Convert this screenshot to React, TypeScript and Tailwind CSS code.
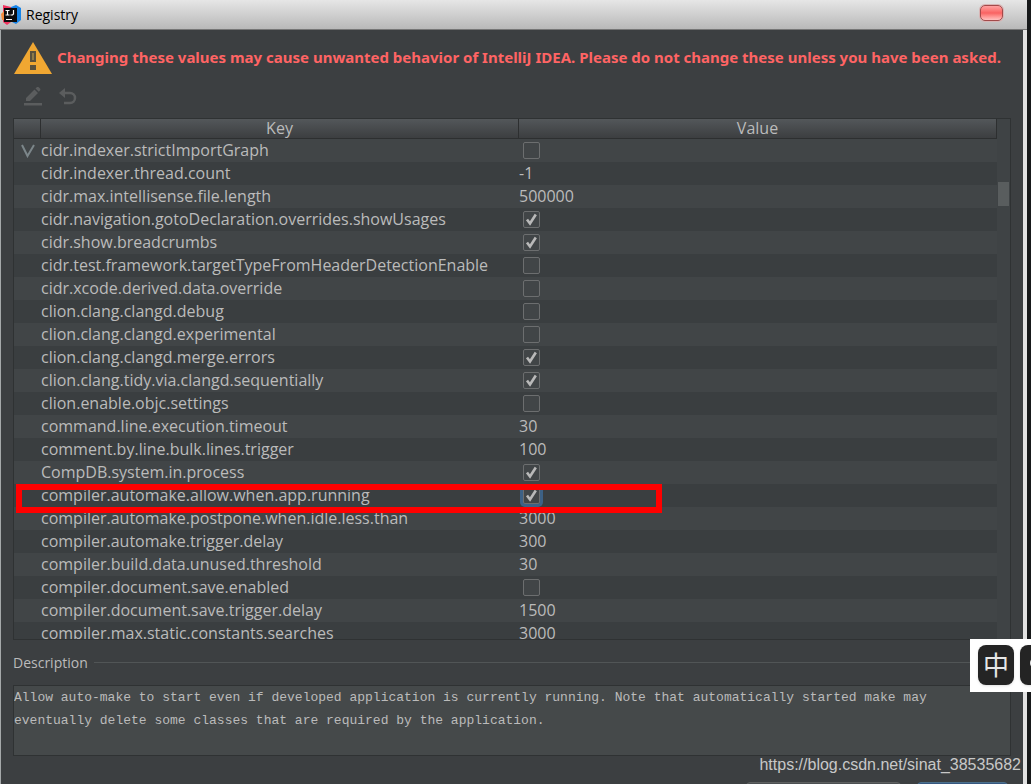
import { useState } from "react";

type Value = string | boolean;

interface RegistryEntry {
  key: string;
  value: Value;
}

const ENTRIES: RegistryEntry[] = [
  { key: "cidr.indexer.strictImportGraph", value: false },
  { key: "cidr.indexer.thread.count", value: "-1" },
  { key: "cidr.max.intellisense.file.length", value: "500000" },
  { key: "cidr.navigation.gotoDeclaration.overrides.showUsages", value: true },
  { key: "cidr.show.breadcrumbs", value: true },
  { key: "cidr.test.framework.targetTypeFromHeaderDetectionEnable", value: false },
  { key: "cidr.xcode.derived.data.override", value: false },
  { key: "clion.clang.clangd.debug", value: false },
  { key: "clion.clang.clangd.experimental", value: false },
  { key: "clion.clang.clangd.merge.errors", value: true },
  { key: "clion.clang.tidy.via.clangd.sequentially", value: true },
  { key: "clion.enable.objc.settings", value: false },
  { key: "command.line.execution.timeout", value: "30" },
  { key: "comment.by.line.bulk.lines.trigger", value: "100" },
  { key: "CompDB.system.in.process", value: true },
  { key: "compiler.automake.allow.when.app.running", value: true },
  { key: "compiler.automake.postpone.when.idle.less.than", value: "3000" },
  { key: "compiler.automake.trigger.delay", value: "300" },
  { key: "compiler.build.data.unused.threshold", value: "30" },
  { key: "compiler.document.save.enabled", value: false },
  { key: "compiler.document.save.trigger.delay", value: "1500" },
  { key: "compiler.max.static.constants.searches", value: "3000" },
];

const SELECTED = "compiler.automake.allow.when.app.running";

const DESCRIPTION =
  "Allow auto-make to start even if developed application is currently running. Note that automatically started make may\neventually delete some classes that are required by the application.";

const IdeaLogo = () => (
  <svg width="20" height="20" viewBox="0 0 20 20" className="shrink-0">
    <path d="M2 0l8 2v15l-4 3-4-3V9z" fill="#f0345f" />
    <path d="M0 9l4-4v10l-3 0z" fill="#f58b3c" />
    <path d="M10 2l5-2 5 3v12l-5 4-6-3z" fill="#1684e8" />
    <path d="M3 3h13v14H3z" fill="#0b0b0d" />
    <path
      d="M4.500 5.500h4M6.500 5.500v4.500M4.500 10h4M12.500 5v4l-1 1h-2M5 14.500h6"
      stroke="#fff"
      strokeWidth="1.200"
      fill="none"
    />
  </svg>
);

const WarningIcon = () => (
  <svg width="38" height="32" viewBox="0 0 38 32" className="shrink-0">
    <path d="M19 0L38 32H0z" fill="#f0a732" />
    <path d="M16 9h6v11h-6zM16 23h6v5h-6z" fill="#5a503c" />
    <path d="M18 11h2v7h-2z" fill="#8f7a48" />
  </svg>
);

const PencilIcon = () => (
  <svg width="20" height="20" viewBox="0 0 20 20" fill="#5b5d5e">
    <path d="M1 16h18v2.500H1z" />
    <path d="M3 11l8.500-8.500 3.500 3.500L7 14H3zM12.500 1.500l1.500-1.500q1-.5 2 .5l1 1q.8 1 0 2L15.800 4.800z" />
  </svg>
);

const UndoIcon = () => (
  <svg width="18" height="18" viewBox="0 0 18 18">
    <path d="M0 5l6-5v10z" fill="#5b5d5e" />
    <path
      d="M4 5h7a5 5 0 010 10H5"
      fill="none"
      stroke="#5b5d5e"
      strokeWidth="2.500"
    />
  </svg>
);

interface CheckProps {
  label: string;
  checked: boolean;
  focused: boolean;
  onChange: () => void;
}

const Check: React.FC<CheckProps> = ({ label, checked, focused, onChange }) => {
  return (
    <span className="relative ml-1 grid size-[17px]">
      <input
        type="checkbox"
        aria-label={label}
        checked={checked}
        onChange={onChange}
        className={`size-[17px] appearance-none rounded-xs border border-[#6c6e6f] bg-[#414547] ${
          focused ? "ring-3 ring-[#3d6185]" : ""
        }`}
      />
      {checked && (
        <svg
          viewBox="0 0 17 17"
          className="pointer-events-none absolute inset-0 size-[17px]"
        >
          <path
            d="M4 8.500l3 4 5.800-9"
            fill="none"
            stroke="#b9b9b9"
            strokeWidth="2.600"
          />
        </svg>
      )}
    </span>
  );
};

const RegistryTable = () => {
  const [entries, setEntries] = useState<RegistryEntry[]>(ENTRIES);

  const toggle = (key: string) => {
    setEntries(
      entries.map((entry) =>
        entry.key === key ? { ...entry, value: !entry.value } : entry
      )
    );
  };

  return (
    <div className="flex min-h-0 flex-1 overflow-hidden border border-[#2f3233] text-base">
      <div className="min-w-0 flex-1 overflow-hidden">
        <table className="w-full table-fixed border-separate border-spacing-0 text-left">
          <colgroup>
            <col className="w-[27px]" />
            <col />
            <col />
          </colgroup>
          <thead>
            <tr className="h-5 bg-linear-to-b from-[#53575a] to-[#3b3d3f] text-center leading-[19px]">
              <th className="border-r border-b border-[#2d2f30] p-0" />
              <th className="border-r border-b border-[#2d2f30] p-0 font-normal">
                Key
              </th>
              <th className="border-r border-b border-[#2d2f30] p-0 font-normal">
                Value
              </th>
            </tr>
          </thead>
          <tbody>
            {entries.map((entry, index) => (
              <tr
                key={entry.key}
                className="h-[23px] leading-[23px] odd:bg-[#414547] even:bg-[#3a3e40]"
              >
                <td className="relative p-0">
                  {index === 0 && (
                    <svg
                      width="14"
                      height="14"
                      viewBox="0 0 14 14"
                      className="ml-[7px]"
                    >
                      <path
                        d="M1 1l5.500 11L13 1"
                        fill="none"
                        stroke="#7c868a"
                        strokeWidth="2"
                      />
                    </svg>
                  )}
                  {entry.key === SELECTED && (
                    <span className="pointer-events-none absolute top-0 left-0.5 z-10 h-[29px] w-[646px] border-6 border-[#ff0000]" />
                  )}
                </td>
                <td className="p-0 whitespace-nowrap">{entry.key}</td>
                <td className="p-0">
                  {typeof entry.value === "boolean" ? (
                    <Check
                      label={entry.key}
                      checked={entry.value}
                      focused={entry.key === SELECTED}
                      onChange={() => toggle(entry.key)}
                    />
                  ) : (
                    entry.value
                  )}
                </td>
              </tr>
            ))}
          </tbody>
        </table>
      </div>
      <div className="w-[13px] bg-[#3f4345] px-px pt-[63px]">
        <div className="h-6 bg-[#595d5e]" />
      </div>
    </div>
  );
};

// Floating input method bar at the right edge of the desktop
const InputMethodBar = () => (
  <div className="absolute right-0 bottom-[92px] z-20 flex h-[53px] w-[61px] gap-1.5 overflow-hidden bg-white py-1.5 pl-2">
    <div className="grid h-10 w-9 shrink-0 place-items-center rounded-lg bg-[#242424] pb-0.5 font-['Noto_Sans_CJK_SC',sans-serif] text-[26px] leading-9 text-[#e6e6e6] shadow">
      中
    </div>
    <div className="h-10 w-9 shrink-0 rounded-lg bg-[#242424] pt-3 pl-2.5 shadow">
      <div className="size-3 rounded-full bg-[#e6e6e6]" />
    </div>
  </div>
);

export default function App() {
  return (
    <div className="relative flex h-screen overflow-hidden bg-[#17191a] font-['Open_Sans',sans-serif] text-sm text-[#bbbbbb]">
      <main className="flex min-w-0 flex-1 flex-col">
        <header className="flex h-[30px] shrink-0 items-center border-b border-[#777777] bg-linear-to-b from-[#e6e6e6] to-[#b9b9b9] pr-6 pl-px text-black">
          <IdeaLogo />
          <h1 className="ml-[5px] flex-1">Registry</h1>
          <button
            aria-label="Close"
            className="mb-1 h-4 w-[23px] rounded-[5px] border border-[#a34a4a] bg-linear-to-b from-[#ffa0a0] via-[#f96262] to-[#ffc0c0] ring-1 ring-[#d8b4b4]"
          />
        </header>
        <div className="flex min-h-0 flex-1 flex-col border-r-4 border-l border-r-[#e2e2e2] border-l-[#a5a9aa] bg-[#3c3f41] pr-3 pl-3">
          <div className="mt-3 flex h-8 shrink-0 items-center gap-[5px] pl-px">
            <WarningIcon />
            <p className="font-['Noto_Sans',sans-serif] text-[15px] font-bold whitespace-nowrap text-[#ff6464]">
              Changing these values may cause unwanted behavior of IntelliJ
              IDEA. Please do not change these unless you have been asked.
            </p>
          </div>
          <div className="flex h-11 shrink-0 items-center gap-4 pt-0.5 pl-[10px]">
            <button aria-label="Edit">
              <PencilIcon />
            </button>
            <button aria-label="Revert">
              <UndoIcon />
            </button>
          </div>
          <RegistryTable />
          <section className="shrink-0">
            <div className="flex h-[45px] items-center gap-1.5">
              <label htmlFor="description">Description</label>
              <span className="h-px flex-1 bg-[#515556]" />
            </div>
            <textarea
              id="description"
              readOnly
              defaultValue={DESCRIPTION}
              className="block h-[71px] w-full resize-none overflow-hidden border border-[#2f3233] bg-[#45494a] font-['Liberation_Mono',monospace] text-[13px] leading-[23px] text-[#bbbbbb] outline-none"
            />
          </section>
          <footer className="flex h-7 shrink-0 items-start justify-end gap-4 overflow-hidden pt-[26px] pr-[3px]">
            <button
              aria-label="Restore Defaults"
              className="h-8 w-[155px] shrink-0 rounded border border-[#5e6060] bg-[#4c5052]"
            />
            <button
              aria-label="Close dialog"
              className="h-8 w-[91px] shrink-0 rounded border border-[#4c708c] bg-[#365880]"
            />
          </footer>
        </div>
      </main>
      <div className="w-1 shrink-0 bg-[#17191a]" />
      <InputMethodBar />
      <p className="absolute right-2.5 bottom-[7px] font-['Liberation_Sans',sans-serif] text-base leading-6 text-[#c8c8c8]">
        https://blog.csdn.net/sinat_38535682
      </p>
    </div>
  );
}
